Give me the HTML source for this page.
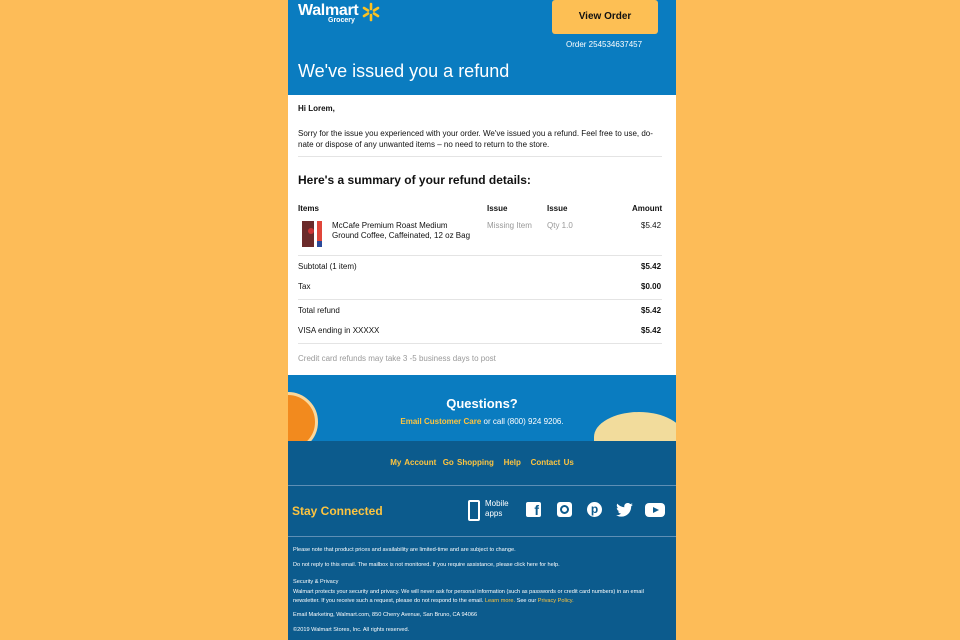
<!DOCTYPE html>
<html><head><meta charset="utf-8"><style>
*{margin:0;padding:0;box-sizing:border-box}
body{width:960px;height:640px;background:#fdbc58;font-family:"Liberation Sans",Arial,sans-serif;position:relative;overflow:hidden}
#c{position:absolute;left:288px;top:0;width:388px;height:640px;background:#fff}
.a{position:absolute;white-space:nowrap}
.hdr{position:absolute;left:0;top:0;width:388px;height:95px;background:#0a7cc0}
.q{position:absolute;left:0;top:375px;width:388px;height:66px;background:#0a7cc0;overflow:hidden}
.ft{position:absolute;left:0;top:441px;width:388px;height:199px;background:#0c5b8d}
.hr{position:absolute;left:10px;width:364px;height:1px;background:#e4e4e4}
.t{font-size:8px;color:#111}
.b{font-weight:bold}
.g{color:#999}
.f{font-size:5.6px;color:#fff}
.y{color:#fdc440}
</style></head><body>
<div id="c">
<div class="hdr">
 <div class="a b" style="left:10px;top:2px;font-size:16px;color:#fff;letter-spacing:-0.3px">Walmart</div>
 <div class="a b" style="left:40px;top:17px;font-size:7px;color:#fff">Grocery</div>
 <svg class="a" style="left:72px;top:2px" width="22" height="20" viewBox="-11 -10 22 20"><g stroke="#fdc220" stroke-width="2.6" stroke-linecap="round"><line x1="0" y1="-3" x2="0" y2="-8"/><line x1="0" y1="3" x2="0" y2="8"/><line x1="-3" y1="-1.5" x2="-7" y2="-4"/><line x1="3" y1="-1.5" x2="7" y2="-4"/><line x1="-3" y1="1.5" x2="-7" y2="4"/><line x1="3" y1="1.5" x2="7" y2="4"/></g></svg>
 <div class="a b" style="left:264px;top:0;width:106px;height:34px;background:#fdbf54;border-radius:3px;font-size:10px;color:#111;text-align:center;line-height:34px">View Order</div>
 <div class="a" style="left:278px;top:40px;font-size:8px;color:#fff">Order 254534637457</div>
 <div class="a" style="left:10px;top:61px;font-size:18px;color:#fff">We've issued you a refund</div>
</div>
<div class="a t b" style="left:10px;top:104px">Hi Lorem,</div>
<div class="a t" style="left:10px;top:128px;line-height:11px">Sorry for the issue you experienced with your order. We've issued you a refund. Feel free to use, do-<br>nate or dispose of any unwanted items – no need to return to the store.</div>
<div class="hr" style="top:156px"></div>
<div class="a b" style="left:10px;top:173px;font-size:12px;color:#111">Here's a summary of your refund details:</div>
<div class="a t b" style="left:10px;top:204px">Items</div>
<div class="a t b" style="left:199px;top:204px">Issue</div>
<div class="a t b" style="left:259px;top:204px">Issue</div>
<div class="a t b" style="left:344px;top:204px">Amount</div>
<div class="a" style="left:14px;top:221px;width:12px;height:26px;background:#6b2a2a"></div>
<div class="a" style="left:20px;top:228px;width:6px;height:6px;background:#c33;border-radius:50%"></div>
<div class="a" style="left:29px;top:221px;width:5px;height:20px;background:#e0463a"></div>
<div class="a" style="left:29px;top:241px;width:5px;height:6px;background:#2a4a9a"></div>
<div class="a t" style="left:44px;top:221px;line-height:10px">McCafe Premium Roast Medium<br>Ground Coffee, Caffeinated, 12 oz Bag</div>
<div class="a t g" style="left:199px;top:221px">Missing Item</div>
<div class="a t g" style="left:259px;top:221px">Qty 1.0</div>
<div class="a t" style="left:353px;top:221px">$5.42</div>
<div class="hr" style="top:255px"></div>
<div class="a t" style="left:10px;top:262px">Subtotal (1 item)</div><div class="a t b" style="left:353px;top:262px">$5.42</div>
<div class="a t" style="left:10px;top:282px">Tax</div><div class="a t b" style="left:353px;top:282px">$0.00</div>
<div class="hr" style="top:299px"></div>
<div class="a t" style="left:10px;top:306px">Total refund</div><div class="a t b" style="left:353px;top:306px">$5.42</div>
<div class="a t" style="left:10px;top:326px">VISA ending in XXXXX</div><div class="a t b" style="left:353px;top:326px">$5.42</div>
<div class="hr" style="top:343px"></div>
<div class="a t g" style="left:10px;top:354px">Credit card refunds may take 3 -5 business days to post</div>
<div class="q">
 <div class="a" style="left:-30px;top:17px;width:60px;height:60px;border-radius:50%;background:#f28a1e;border:3px solid #fbd79a"></div>
 <div class="a" style="left:306px;top:37px;width:90px;height:50px;border-radius:50% 50% 0 0;background:#f2dc9c"></div>
 <div class="a b" style="left:0;width:388px;text-align:center;top:21px;font-size:13px;color:#fff">Questions?</div>
 <div class="a" style="left:0;width:388px;text-align:center;top:42px;font-size:8px;color:#fff"><b class="y">Email Customer Care</b> or call (800) 924 9206.</div>
</div>
<div class="ft">
 <div class="a b y" style="left:0;width:388px;text-align:center;top:17px;font-size:8px;word-spacing:1px">My Account &nbsp;Go Shopping &nbsp;&nbsp;Help &nbsp;&nbsp;Contact Us</div>
 <div class="a" style="left:0;top:44px;width:388px;height:1px;background:#5e8fb5"></div>
 <div class="a b y" style="left:4px;top:63px;font-size:12px">Stay Connected</div>
 <div class="a" style="left:180px;top:59px;width:12px;height:21px;border:2px solid #fff;border-radius:2px"></div>
 <div class="a" style="left:197px;top:58px;font-size:8px;color:#fff;line-height:10px">Mobile<br>apps</div>
 <div class="a b" style="left:238px;top:61px;width:15px;height:15px;background:#fff;border-radius:2px;color:#0c5b8d;font-size:14px;text-align:right;line-height:17px;padding-right:2px">f</div>
 <div class="a" style="left:269px;top:61px;width:15px;height:15px;background:#fff;border-radius:3px"><div class="a" style="left:3px;top:3px;width:9px;height:9px;border-radius:50%;border:2px solid #0c5b8d"></div></div>
 <div class="a b" style="left:299px;top:61px;width:15px;height:15px;border-radius:50%;background:#fff;color:#0c5b8d;font-size:12px;text-align:center;line-height:15px">p</div>
 <svg class="a" style="left:328px;top:62px" width="17" height="14" viewBox="0 0 24 20"><path fill="#fff" d="M24 2.4a10 10 0 0 1-2.8.8A5 5 0 0 0 23.3.4a10 10 0 0 1-3.1 1.2A4.9 4.9 0 0 0 11.8 6 14 14 0 0 1 1.7.9a4.9 4.9 0 0 0 1.5 6.6A4.9 4.9 0 0 1 1 6.9a4.9 4.9 0 0 0 3.9 4.8 5 5 0 0 1-2.2.1 4.9 4.9 0 0 0 4.6 3.4A9.9 9.9 0 0 1 0 17.3 14 14 0 0 0 7.5 19.5c9 0 14-7.5 14-14v-.6A10 10 0 0 0 24 2.4z"/></svg>
 <div class="a" style="left:357px;top:62px;width:20px;height:14px;background:#fff;border-radius:4px"><div class="a" style="left:8px;top:4px;border-left:6px solid #0c5b8d;border-top:3px solid transparent;border-bottom:3px solid transparent"></div></div>
 <div class="a" style="left:0;top:95px;width:388px;height:1px;background:#5e8fb5"></div>
 <div class="a f" style="left:5px;top:106px">Please note that product prices and availability are limited-time and are subject to change.</div>
 <div class="a f" style="left:5px;top:121px">Do not reply to this email. The mailbox is not monitored. If you require assistance, please click here for help.</div>
 <div class="a f" style="left:5px;top:137px;line-height:9.5px">Security &amp; Privacy<br>Walmart protects your security and privacy. We will never ask for personal information (such as passwords or credit card numbers) in an email<br>newsletter. If you receive such a request, please do not respond to the email. <span class="y">Learn more.</span> See our <span class="y">Privacy Policy.</span></div>
 <div class="a f" style="left:5px;top:171px">Email Marketing, Walmart.com, 850 Cherry Avenue, San Bruno, CA 94066</div>
 <div class="a f" style="left:5px;top:186px">©2019 Walmart Stores, Inc. All rights reserved.</div>
</div>
</div>
</body></html>
